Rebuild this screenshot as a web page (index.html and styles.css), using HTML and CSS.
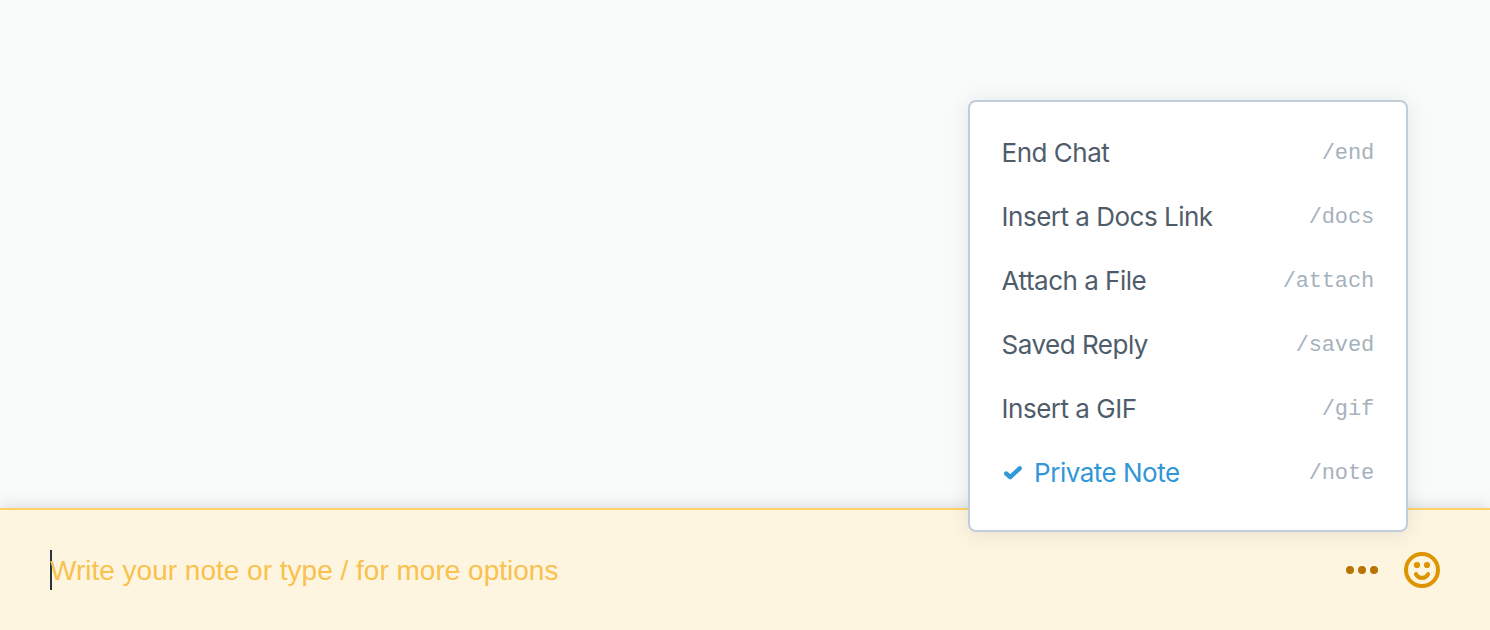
FILE: index.html
```html
<!DOCTYPE html>
<html lang="en">
<head>
<meta charset="utf-8">
<title>Private note</title>
<link rel="stylesheet" href="styles.css">
</head>
<body>
<main class="chat">
  <section class="history"></section>
  <footer class="composer">
    <div class="field"><span class="placeholder">Write your note or type / for more options</span></div>
    <div class="actions">
      <svg class="more" viewBox="0 0 32 8"><circle cx="4" cy="4" r="4"/><circle cx="16" cy="4" r="4"/><circle cx="28" cy="4" r="4"/></svg>
      <svg class="smiley" viewBox="0 0 36 36"><circle class="line" cx="18" cy="18" r="16"/><circle cx="13" cy="13" r="3.1"/><circle cx="23" cy="13" r="3.1"/><path class="line mouth" d="M11.9 22.1C14.3 27.3 21.7 27.3 24.1 22.1"/></svg>
    </div>
    <ul class="menu">
      <li class="item"><span class="label">End Chat</span><span class="command">/end</span></li>
      <li class="item"><span class="label">Insert a Docs Link</span><span class="command">/docs</span></li>
      <li class="item"><span class="label">Attach a File</span><span class="command">/attach</span></li>
      <li class="item"><span class="label">Saved Reply</span><span class="command">/saved</span></li>
      <li class="item"><span class="label">Insert a GIF</span><span class="command">/gif</span></li>
      <li class="item selected"><svg class="check" viewBox="0 0 20 16"><path d="M3.2 8.5L7.2 12.1L16.7 3.3"/></svg><span class="label">Private Note</span><span class="command">/note</span></li>
    </ul>
  </footer>
</main>
</body>
</html>
```
FILE: styles.css
```css
* { box-sizing: border-box; }
body { margin: 0; }
.chat { display: flex; flex-direction: column; height: 630px; overflow: hidden; background: #f9fbfa; }
.history { flex: 1; }
.composer {
  position: relative;
  display: flex;
  align-items: center;
  justify-content: space-between;
  height: 122px;
  padding: 0 50px;
  background: #fef5e0;
  border-top: 2px solid #ffd168;
  box-shadow: 0 0 16px rgba(64, 84, 98, .22);
}
.field { display: flex; align-items: center; height: 40px; border-left: 2px solid #253642; }
.placeholder {
  margin-left: -2px;
  padding-top: 1px;
  font: 28px/38px "Liberation Sans", Arial, sans-serif;
  color: #f9c14e;
  white-space: nowrap;
}
.actions { display: flex; align-items: center; gap: 26px; }
.more { width: 32px; height: 8px; fill: #b87300; }
.smiley { width: 36px; height: 36px; fill: #dc9500; }
.line { fill: none; stroke: #dc9500; stroke-width: 4; }
.mouth { stroke-linecap: round; }
.menu {
  position: absolute;
  right: 82px;
  bottom: 98px;
  width: 440px;
  height: 432px;
  margin: 0;
  padding: 19px 32px;
  list-style: none;
  background: #fff;
  border: 2px solid #c1cdd8;
  border-radius: 8px;
  box-shadow: 0 2px 20px rgba(64, 84, 98, .13);
}
.item { display: flex; align-items: center; height: 64px; color: #4f5d6b; }
.label { margin-left: -.4px; font: 26px/32px Inter, sans-serif; letter-spacing: -.5px; white-space: nowrap; }
.command { margin-left: auto; padding-top: 2px; font: 22px/32px "Liberation Mono", monospace; letter-spacing: -.15px; color: #a5b2bd; }
.selected { color: #3197d6; }
.check { width: 20px; height: 16px; margin: 0 11.5px 0 1px; fill: none; stroke: #3197d6; stroke-width: 4.4; stroke-linecap: round; stroke-linejoin: round; }
```
